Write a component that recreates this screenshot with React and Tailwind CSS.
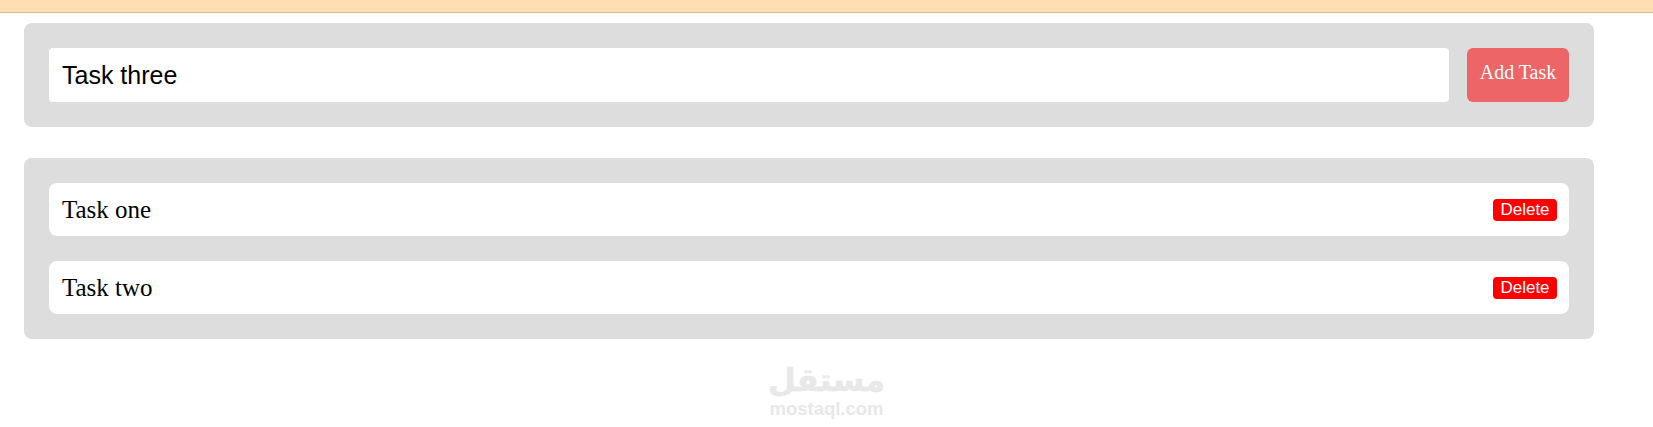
// App.jsx - Task list
const tasks = ['Task one', 'Task two'];

export default function App() {
  return (
    <div className="min-h-[427px] bg-white overflow-hidden font-['Liberation_Serif',serif] text-black">
      <div className="h-[13px] bg-[#ffdeb3] border-b border-[#deb887]"></div>

      <div className="w-[1570px] ml-[24px] mt-[10px]">
        {/* Formulario */}
        <form className="flex gap-[18px] p-[25px] bg-[#dddddd] rounded-[8px]">
          <input
            type="text"
            defaultValue="Task three"
            className="flex-1 h-[54px] px-[13px] bg-white rounded-[4px] outline-none text-[25px] font-['Liberation_Sans',sans-serif]"
          />
          <button type="button" className="w-[102px] h-[54px] pb-[6px] bg-[#ed6566] text-white text-[20px] rounded-[6px]">
            Add Task
          </button>
        </form>

        {/* Lista */}
        <div className="flex flex-col gap-[25px] mt-[31px] p-[25px] bg-[#dddddd] rounded-[8px]">
          {tasks.map((task) => (
            <div key={task} className="flex items-center justify-between h-[53px] pl-[13px] pr-[12px] bg-white rounded-[8px]">
              <span className="text-[25px]">{task}</span>
              <button type="button" className="w-[64px] h-[22px] pb-[1px] bg-[#ff0000] text-white text-[17px] leading-[21px] rounded-[4px] font-['Liberation_Sans',sans-serif]">
                Delete
              </button>
            </div>
          ))}
        </div>
      </div>

      {/* Marca de agua */}
      <div className="flex flex-col items-center mt-[22px] text-[#e8e8e8] font-bold select-none">
        <span dir="rtl" className="text-[32px] leading-[38px] [-webkit-text-stroke:0.5px_#e8e8e8] font-['DejaVu_Sans',sans-serif]">مستقل</span>
        <span className="text-[18.5px] leading-[20px] font-['Liberation_Sans',sans-serif]">mostaql.com</span>
      </div>
    </div>
  );
}
